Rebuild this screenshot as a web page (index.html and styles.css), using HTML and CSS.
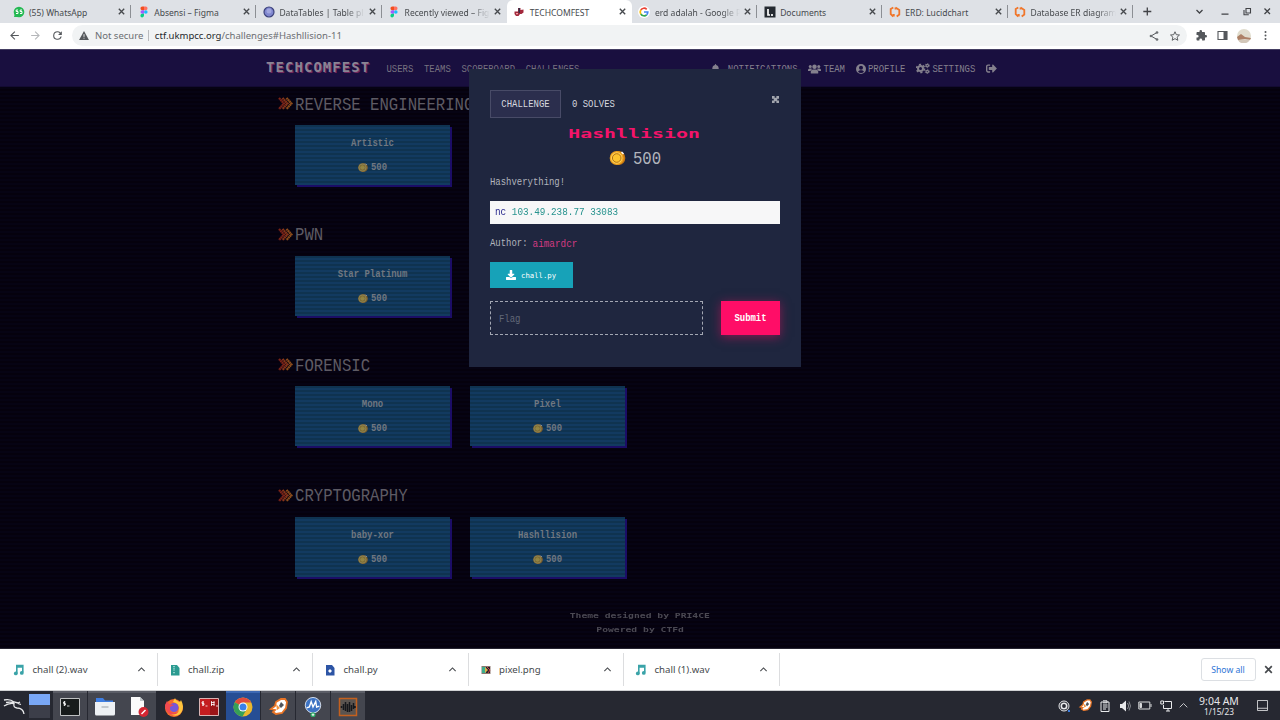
FILE: index.html
```html
<!DOCTYPE html>
<html lang="en">
<head>
<meta charset="utf-8">
<title>TECHCOMFEST</title>
<link rel="stylesheet" href="styles.css">
</head>
<body>
<svg class="defs" aria-hidden="true">
  <symbol id="close" viewBox="0 0 10 10"><path d="M2 2l6 6M8 2l-6 6" stroke="currentColor" stroke-width="1.5" fill="none"/></symbol>
  <symbol id="up" viewBox="0 0 10 10"><path d="M1.5 6.8L5 3.3l3.5 3.5" stroke="currentColor" stroke-width="1.2" fill="none"/></symbol>
  <symbol id="figma" viewBox="0 0 10 12"><path d="M5 0.500H3.300a1.800 1.800 0 000 3.700H5z" fill="#f24e1e"/><path d="M5 .5h1.700a1.800 1.800 0 010 3.700H5z" fill="#ff7262"/><path d="M5 4.200H3.300a1.800 1.800 0 000 3.600H5z" fill="#a259ff"/><circle cx="6.800" cy="6" r="1.800" fill="#1abcfe"/><path d="M5 7.800H3.300a1.800 1.800 0 101.700 1.800z" fill="#0acf83"/></symbol>
  <symbol id="lucid" viewBox="0 0 12 12"><path d="M4.300 1.500L1.700 3v5l2.600 2.500M6.500 1.500L10.300 4v4.500l-2.600 2M6.500 1.500v2M4.800 8v2.500" fill="none" stroke="#f0762b" stroke-width="1.800"/></symbol>
  <symbol id="coin" viewBox="0 0 16 16"><ellipse cx="9.200" cy="8" rx="6.600" ry="7" fill="#c87812"/><circle cx="7.200" cy="8" r="7" fill="#eea11e"/><circle cx="7.200" cy="8" r="5.700" fill="#ffd35a"/><circle cx="7.200" cy="8" r="4.300" fill="#fcc32f" stroke="#a9680c" stroke-width=".9"/><path d="M12 2l2 2" stroke="#fff" stroke-width="1.500"/></symbol>
  <symbol id="chev" viewBox="0 0 15 13"><path d="M1 1l5 5.500L1 12" stroke="#a52f1b" stroke-width="2.300" fill="none" stroke-dasharray="1.800 .3"/><path d="M4.500 1l5 5.500-5 5.500" stroke="#b2451d" stroke-width="2.300" fill="none" stroke-dasharray="1.800 .3"/><path d="M8.500 1l5 5.500-5 5.500" stroke="#b9651f" stroke-width="2.300" fill="none" stroke-dasharray="1.800 .3"/></symbol>
  <symbol id="music" viewBox="0 0 12 12"><path d="M3.800 9.500V1.500h6v7M3.800 3h6" fill="none" stroke="#3aa3a8" stroke-width="1.600"/><circle cx="2.800" cy="9.400" r="1.900" fill="#3aa3a8"/><circle cx="8.800" cy="8.900" r="1.900" fill="#3aa3a8"/></symbol>
  <symbol id="burp" viewBox="0 0 20 18"><path d="M3 11l4-3 1-4 5-3h4l2 3-1 6-4 5-6 1-3-2 2-2z" fill="#fff" stroke="#e87425" stroke-width="1.800"/><path d="M8 6l4 4-3 2z" fill="#f3933d"/><path d="M13 4l3 3-3 3-2-2z" fill="#51545b"/></symbol>
</svg>

<header class="tabs">
  <div class="tab"><svg class="fav" viewBox="0 0 12 12"><circle cx="6" cy="6" r="5.300" fill="#24b953"/><path d="M1 11l1-4 3 4z" fill="#24b953"/><path d="M5 4H3.200v1.500H5v2H3M9 4H7.200v1.500H9v2H7" stroke="#fff" fill="none"/></svg><span class="label">(55) WhatsApp</span><svg class="x"><use href="#close"/></svg></div>
  <div class="tab"><svg class="fav"><use href="#figma"/></svg><span class="label">Absensi – Figma</span><svg class="x"><use href="#close"/></svg></div>
  <div class="tab"><svg class="fav" viewBox="0 0 12 12"><circle cx="6" cy="6" r="5" fill="#8087cf" stroke="#3c427c" stroke-width="1.200"/><circle cx="6" cy="5" r="2.500" fill="#a1a6df"/></svg><span class="label fade">DataTables | Table pl</span><svg class="x"><use href="#close"/></svg></div>
  <div class="tab last"><svg class="fav"><use href="#figma"/></svg><span class="label fade">Recently viewed – Fig</span><svg class="x"><use href="#close"/></svg></div>
  <div class="tab active"><svg class="fav" viewBox="0 0 12 12"><path d="M1.500 5.500h3.500V2h2.500v2l3-.5v3l-2 1.500H7l-1.500 2H3L1.500 8z" fill="#a3283c"/><path d="M5.500 2h1.500v5H5.500z" fill="#343149"/><path d="M3 7h2v1.300H3z" fill="#f0a5a7"/></svg><span class="label">TECHCOMFEST</span><svg class="x"><use href="#close"/></svg></div>
  <div class="tab"><svg class="fav" viewBox="0 0 12 12"><circle cx="6" cy="6" r="6" fill="#fff"/><g fill="none" stroke-width="1.700"><path d="M2.800 4A3.800 3.800 0 018.700 3.300" stroke="#ea4335"/><path d="M2.800 4a3.800 3.800 0 000 4" stroke="#fbbc05"/><path d="M2.800 8a3.800 3.800 0 005.800.8" stroke="#34a853"/><path d="M8.600 8.800A3.800 3.800 0 009.800 6H6" stroke="#4285f4"/></g></svg><span class="label fade">erd adalah - Google P</span><svg class="x"><use href="#close"/></svg></div>
  <div class="tab"><svg class="fav" viewBox="0 0 12 12"><path d="M.5.500h11v11H.5z" fill="#252a31"/><path d="M4 3v6h2M8 8v2" stroke="#fff" stroke-width="1.700" fill="none"/></svg><span class="label">Documents</span><svg class="x"><use href="#close"/></svg></div>
  <div class="tab"><svg class="fav"><use href="#lucid"/></svg><span class="label">ERD: Lucidchart</span><svg class="x"><use href="#close"/></svg></div>
  <div class="tab"><svg class="fav"><use href="#lucid"/></svg><span class="label fade">Database ER diagram</span><svg class="x"><use href="#close"/></svg></div>
  <svg class="strip-end" viewBox="0 0 147 23" fill="none" stroke="#404246" stroke-width="1.300"><path d="M10.300 11.500h8M14.300 7.500v8"/><path d="M63.500 10l3 3 3-3M88.500 14.200h7"/><path d="M113 8.500h4.500v4.500H113zM111 10v4.800h4.800" stroke-width="1.100"/><path d="M131.500 8.500l5.500 5.500M137 8.500l-5.500 5.500"/></svg>
</header>

<div class="toolbar">
  <svg class="tool" viewBox="0 0 24 24"><path d="M20 11H7.800l5.600-5.600L12 4l-8 8 8 8 1.400-1.400L7.800 13H20z"/></svg>
  <svg class="tool dim" viewBox="0 0 24 24"><path d="M4 11h12.200l-5.600-5.600L12 4l8 8-8 8-1.400-1.400 5.600-5.600H4z"/></svg>
  <svg class="tool" viewBox="0 0 24 24"><path d="M17.650 6.350A7.960 7.960 0 0 0 12 4a8 8 0 1 0 7.730 10h-2.080A6 6 0 1 1 12 6c1.660 0 3.140.69 4.220 1.780L13 11h7V4z"/></svg>
  <div class="omnibox">
    <svg class="warn" viewBox="0 0 22 20"><path d="M11 0l11 20H0z" fill="#55585c"/><path d="M11 7v6M11 15v2" stroke="#f1f3f4" stroke-width="2"/></svg>
    <span class="insecure">Not secure</span><span class="url"><b>ctf.ukmpcc.org</b>/challenges#Hashllision-11</span>
    <svg class="tool share" viewBox="0 0 24 24"><path d="M18 5L6 12l12 7" fill="none" stroke="#55585c" stroke-width="2"/><circle cx="18" cy="5" r="2.700"/><circle cx="6" cy="12" r="2.700"/><circle cx="18" cy="19" r="2.700"/></svg>
    <svg class="tool" viewBox="0 0 24 24"><path d="M12 3.500l2.600 5.900 6.400.6-4.800 4.300 1.400 6.300L12 17.300l-5.600 3.300 1.400-6.300L3 10l6.400-.6z" fill="none" stroke="#55585c" stroke-width="1.900"/></svg>
  </div>
  <div class="actions">
    <svg class="tool" viewBox="0 0 24 24"><path d="M20.500 11H19V7c0-1.100-.9-2-2-2h-4V3.500a2.500 2.500 0 0 0-5 0V5H4c-1.100 0-2 .9-2 2v3.800h1.500a2.700 2.700 0 0 1 0 5.400H2V20c0 1.100.9 2 2 2h3.800v-1.500a2.700 2.700 0 0 1 5.400 0V22H17c1.100 0 2-.9 2-2v-4h1.500a2.500 2.500 0 0 0 0-5z"/></svg>
    <svg class="tool" viewBox="0 0 24 24"><path d="M3 4h18v16H3z" fill="none" stroke="#55585c" stroke-width="2.200"/><path d="M14 4h7v16h-7z"/></svg>
    <svg class="avatar" viewBox="0 0 14 14"><circle cx="7" cy="7" r="7" fill="#e0dccd"/><path d="M0 8l4-3 4 3 6 1-1 2-5-1-7 1z" fill="#ad8066"/><path d="M1 11l12-.5a7 7 0 01-11 2z" fill="#d2c7b9"/></svg>
    <svg class="tool" viewBox="0 0 24 24"><circle cx="12" cy="5" r="2"/><circle cx="12" cy="12" r="2"/><circle cx="12" cy="19" r="2"/></svg>
  </div>
</div>

<main class="page">
  <nav class="nav">
    <span class="brand">TECHCOMFEST</span>
    <div class="links"><span class="px">USERS</span><span class="px">TEAMS</span><span class="px">SCOREBOARD</span><span class="px">CHALLENGES</span></div>
    <div class="links user">
      <span class="item bell"><svg width="9" height="10" viewBox="0 0 448 512"><path d="M224 512c35 0 64-29 64-64H160c0 35 29 64 64 64zm215-150c-19-21-55-52-55-154 0-78-55-140-128-155V32c0-18-14-32-32-32s-32 14-32 32v21C119 68 64 130 64 208c0 102-36 133-55 154-6 7-9 14-9 22 0 16 13 32 32 32h384c19 0 32-16 32-32 0-8-3-15-9-22z"/></svg><span class="px">NOTIFICATIONS</span></span>
      <span class="item"><svg width="13" height="10" viewBox="0 0 26 20"><circle cx="4.500" cy="5" r="3"/><circle cx="21.500" cy="5" r="3"/><circle cx="13" cy="5.500" r="4.500"/><path d="M0 14v-2q0-3 3-3h3q2 0 2.500 1-3 1.500-3.500 4zM26 14v-2q0-3-3-3h-3q-2 0-2.500 1 3 1.500 3.500 4zM5.500 18v-2q0-5 5-5h5q5 0 5 5v2q0 1-1 1h-13q-1 0-1-1z"/></svg><span class="px">TEAM</span></span>
      <span class="item"><svg width="10" height="10" viewBox="0 0 20 20"><path fill-rule="evenodd" d="M10 0a10 10 0 100 20 10 10 0 000-20zm0 3.500a4 4 0 110 8 4 4 0 010-8zM4 15.500q1.500-3 4-3h4q2.500 0 4 3-2.500 2.700-6 2.700t-6-2.700z"/></svg><span class="px">PROFILE</span></span>
      <span class="item"><svg width="14" height="11" viewBox="0 0 28 22"><g fill="none" stroke="#84808d"><circle cx="9" cy="11" r="5" stroke-width="4"/><circle cx="9" cy="11" r="8" stroke-width="3" stroke-dasharray="4.400 4"/><circle cx="22.500" cy="5" r="2.500" stroke-width="2.500"/><circle cx="22.500" cy="5" r="4.300" stroke-width="1.500" stroke-dasharray="2.300 2.200"/><circle cx="22.500" cy="17" r="2.500" stroke-width="2.500"/><circle cx="22.500" cy="17" r="4.300" stroke-width="1.500" stroke-dasharray="2.300 2.200"/></g></svg><span class="px">SETTINGS</span></span>
      <span class="item"><svg width="11" height="11" viewBox="0 0 512 512"><path d="M497 273L329 441c-15 15-41 4.500-41-17v-96H152c-13 0-24-11-24-24v-96c0-13 11-24 24-24h136V88c0-21 26-32 41-17l168 168c9 9 9 25 0 34zM192 436v-40c0-7-5-12-12-12H96c-18 0-32-14-32-32V160c0-18 14-32 32-32h84c7 0 12-5 12-12V76c0-7-5-12-12-12H96c-53 0-96 43-96 96v192c0 53 43 96 96 96h84c7 0 12-5 12-12z"/></svg></span>
    </div>
  </nav>

  <div class="board">
    <section class="category"><h2><svg><use href="#chev"/></svg><span>REVERSE ENGINEERING</span></h2>
      <div class="cards"><div class="card"><span class="px bold">Artistic</span><span class="pts"><svg><use href="#coin"/></svg><span class="px bold">500</span></span></div></div></section>
    <section class="category"><h2><svg><use href="#chev"/></svg><span>PWN</span></h2>
      <div class="cards"><div class="card"><span class="px bold">Star Platinum</span><span class="pts"><svg><use href="#coin"/></svg><span class="px bold">500</span></span></div></div></section>
    <section class="category"><h2><svg><use href="#chev"/></svg><span>FORENSIC</span></h2>
      <div class="cards"><div class="card"><span class="px bold">Mono</span><span class="pts"><svg><use href="#coin"/></svg><span class="px bold">500</span></span></div><div class="card"><span class="px bold">Pixel</span><span class="pts"><svg><use href="#coin"/></svg><span class="px bold">500</span></span></div></div></section>
    <section class="category"><h2><svg><use href="#chev"/></svg><span>CRYPTOGRAPHY</span></h2>
      <div class="cards"><div class="card"><span class="px bold">baby-xor</span><span class="pts"><svg><use href="#coin"/></svg><span class="px bold">500</span></span></div><div class="card"><span class="px bold">Hashllision</span><span class="pts"><svg><use href="#coin"/></svg><span class="px bold">500</span></span></div></div></section>
  </div>
  <footer class="credits"><span>Theme designed by PRI4CE</span><span>Powered by CTFd</span></footer>

  <div class="modal">
    <div class="modal-tabs"><span class="pill"><span class="px">CHALLENGE</span></span><span class="px solves">0 SOLVES</span><svg class="dismiss" viewBox="0 0 8 8"><path d="M0 0h3v2h2V0h3v3H6v2h2v3H5V6H3v2H0V5h2V3H0z"/></svg></div>
    <div class="title"><span>Hashllision</span></div>
    <div class="value"><svg><use href="#coin"/></svg><span>500</span></div>
    <p class="desc"><span class="px">Hashverything!</span></p>
    <pre class="code"><span><b>nc</b> 103.49.238.77 33083</span></pre>
    <p class="author"><span class="px">Author:</span><span class="handle">aimardcr</span></p>
    <div class="file"><svg viewBox="0 0 512 512"><path d="M216 0h80c13 0 24 11 24 24v168h88c18 0 26 22 14 34L270 378c-8 8-20 8-28 0L90 226c-12-12-3-34 14-34h88V24c0-13 11-24 24-24zm296 376v112c0 13-11 24-24 24H24c-13 0-24-11-24-24V376c0-13 11-24 24-24h147l49 49c20 20 52 20 72 0l49-49h147c13 0 24 11 24 24z"/></svg><span>chall.py</span></div>
    <div class="form"><div class="flag"><span class="px">Flag</span></div><div class="submit"><span class="px bold">Submit</span></div></div>
  </div>
</main>

<div class="downloads">
  <div class="dl"><svg class="ico"><use href="#music"/></svg><span>chall (2).wav</span><svg class="up"><use href="#up"/></svg></div>
  <div class="dl"><svg class="ico" viewBox="0 0 12 12"><path d="M2 1h6l2.500 3v7.500H2z" fill="#2b9b91"/><path d="M5 2v5M5 8v2" stroke="#c8ede8" stroke-width="1.300" stroke-dasharray="1 .8"/></svg><span>chall.zip</span><svg class="up"><use href="#up"/></svg></div>
  <div class="dl"><svg class="ico" viewBox="0 0 12 12"><path d="M2 1h6l2.500 3v7.500H2z" fill="#2d55a5"/><path d="M4 7l2-2 2 2-2 2z" fill="#fff"/></svg><span>chall.py</span><svg class="up"><use href="#up"/></svg></div>
  <div class="dl"><svg class="ico" viewBox="0 0 12 12"><path d="M1.500 2h9v8h-9z" fill="#8b7770"/><path d="M2 3h4v6H2z" fill="#3dae8d"/><path d="M6 3h4v6H6z" fill="#27222b"/><path d="M5 3l3 3-3 3z" fill="#e1b14c"/><path d="M7 3l3 3-2 3" stroke="#cb4148" fill="none"/></svg><span>pixel.png</span><svg class="up"><use href="#up"/></svg></div>
  <div class="dl"><svg class="ico"><use href="#music"/></svg><span>chall (1).wav</span><svg class="up"><use href="#up"/></svg></div>
  <span class="showall">Show all</span><svg class="shut"><use href="#close"/></svg>
</div>

<div class="taskbar">
  <svg class="kali" viewBox="0 0 22 18" fill="none" stroke="#e9eaec" stroke-width="1.300"><path d="M1 3q6-1.500 10 2l4 1 2-1M3 5.500q5-1 8 .5M1 9q5-3.500 10-2.500-1 4 3 4.500 6 0 7 6M15 6.500l3 1"/></svg>
  <span class="pager"></span>
  <span class="task on"><svg viewBox="0 0 20 18"><path d="M.5.500h19v17H.5z" fill="#171b1b" stroke="#bfc1c2"/><path d="M5.500 4H3.500v1.500h2V7h-2M4.500 3v5M7 8h2.500" stroke="#fff" fill="none" stroke-width=".8"/></svg></span>
  <span class="task on"><svg viewBox="0 0 20 18"><path d="M1 0h7l2 2.500h8V8H1z" fill="#3f7ee2"/><path d="M0 4h20v12q0 1.500-1.500 1.500h-17Q0 17.500 0 16z" fill="#eef1f4"/><path d="M6.500 9h7" stroke="#b5bac0" stroke-width="1.500"/></svg></span>
  <span class="task on"><svg viewBox="0 0 20 20"><path d="M2 0h9l4 4v14H2z" fill="#fbfbfb"/><path d="M11 0v4h4z" fill="#bcc3c8"/><circle cx="14.500" cy="15" r="5" fill="#d42632"/><path d="M12.500 17l4-4" stroke="#fff" stroke-width="1.500"/></svg></span>
  <span class="task"><svg viewBox="0 0 20 20"><circle cx="10" cy="11" r="9" fill="#f4692e"/><path d="M11 1q1 3 5 4l1-2q4 7 0 13-5 5-10 1 8 0 8-6-1-5-6-6z" fill="#ffc53d"/><circle cx="10" cy="10.500" r="4.500" fill="#7656d8"/><path d="M1 8l2-4 2 3 5 1-4 2v4q4 4 9 0-3 5-9 3-5-3-5-9z" fill="#f04950"/></svg></span>
  <span class="task"><svg viewBox="0 0 20 18"><path d="M.5.500h19v17H.5z" fill="#c41d20" stroke="#d9b4b4"/><path d="M11 1h8v16h-8z" fill="#9b1518"/><path d="M5 4H3v1.500h2V7H3M4 3v5M6.500 8h2M12.500 3v5M15 3v5M12 4.500h3.500M12 6.500h3.500M17 8h2" stroke="#fff" fill="none" stroke-width=".8"/></svg></span>
  <span class="task chrome"><svg viewBox="0 0 20 20"><circle cx="10" cy="10" r="9.500" fill="#eab82e"/><path d="M10 10L1.800 5.200A9.500 9.500 0 0118.200 5.500H10z" fill="#e04a3c"/><path d="M10 10L1.800 5.200A9.500 9.500 0 009.500 19.500l4.200-7.200z" fill="#35a058"/><circle cx="10" cy="10" r="4.500" fill="#fff"/><circle cx="10" cy="10" r="3.500" fill="#3b80e8"/></svg></span>
  <span class="task on"><svg><use href="#burp"/></svg></span>
  <span class="task on"><svg viewBox="0 0 20 22"><circle cx="10" cy="9" r="8.500" fill="#3d73c3" stroke="#e0e8f4"/><path d="M3 12l3-1 2-6 2 6 3-6 1 6 3-1" stroke="#fff" stroke-width="1.500" fill="none"/><circle cx="10" cy="19.500" r="2.800" fill="#29a864"/><path d="M8.500 19.500h3M10 18v3" stroke="#fff"/></svg></span>
  <span class="task on"><svg viewBox="0 0 20 20"><path d="M1.500 1.500h17v17h-17z" fill="#5a5450" stroke="#c4601e" stroke-width="1.500"/><path d="M3.500 9v2M5.500 7v6M7.500 5v9M9.500 7v8M11.500 5v10M13.500 8v6M15.500 6v6M17 9v2" stroke="#15171c" stroke-width="1.500"/></svg></span>
  <div class="tray">
    <svg viewBox="0 0 12 12"><circle cx="6" cy="6" r="5" fill="none" stroke="#e8e9eb"/><circle cx="6" cy="6" r="2.700" fill="none" stroke="#e8e9eb" stroke-width="1.600"/><circle cx="11" cy="11" r="1.200" fill="#3b7de0"/></svg>
    <svg class="wide"><use href="#burp"/></svg>
    <svg viewBox="0 0 12 12" fill="none" stroke="#e8e9eb"><path d="M2 2h8v9.500H2zM4 .8h4v2H4M4 5h4.500M4 7h4.500M4 9h3"/></svg>
    <svg viewBox="0 0 12 12"><path d="M1 4h2l4-3.500v11L3 8H1z" fill="#e8e9eb"/><path d="M8.500 3q2.500 3 0 6M10 1.500q3 4.500 0 9" stroke="#888a90" fill="none"/></svg>
    <svg class="wide" viewBox="0 0 14 12" fill="none" stroke="#d8d9db"><path d="M.8 2.500h11v7H.8zM13 4.500v3"/><path d="M2 4h1.500v4H2z" fill="#d8d9db"/></svg>
    <svg viewBox="0 0 12 12" fill="none" stroke="#e8e9eb"><path d="M4.500 1.500h7v7H3.500V5M.8 1h2.700v3H.8zM6 11h4M8 8.500V11"/></svg>
    <svg class="tray-up" viewBox="0 0 10 10"><path d="M.8 7L5 2.800 9.200 7" stroke="#d8d9db" fill="none"/></svg>
  </div>
  <div class="clock"><span>9:04 AM</span><small>1/15/23</small></div>
  <svg class="desk" viewBox="0 0 12 12"><path d="M.5.500h11v11H.5zM.5 9h11" fill="none" stroke="#d8d9db"/></svg>
</div>
</body>
</html>
```
FILE: styles.css
```css
* { box-sizing: border-box; }
body {
  margin: 0; width: 1280px; height: 720px; overflow: hidden;
  display: flex; flex-direction: column;
  font-family: "Noto Sans", sans-serif; font-size: 8.550px; color: #46494d; background: #05020f;
}
svg { flex: none; }
svg:not([fill]) { fill: currentColor; }
.defs { position: absolute; width: 0; height: 0; }
h2, p, pre { margin: 0; font-weight: normal; }

/* browser tabs */
.tabs { height: 23px; flex: none; background: #dee1e6; display: flex; padding-left: 6px; }
.tab { width: 125.200px; flex: none; display: flex; align-items: center; padding: 0 2px 0 7px; position: relative; }
.tab::after { content: ""; width: 1px; height: 13px; background: #8c8f94; position: absolute; right: 0; top: 5px; }
.tab.last::after, .tab.active::after { display: none; }
.tab.active { background: #fff; border-radius: 6px 6px 0 0; }
.fav { width: 12px; height: 12px; margin-right: 4.500px; margin-left: -.5px; }
.label { flex: 1; min-width: 0; white-space: nowrap; margin-right: 3px; transform: translateY(.5px) scaleY(1.060); }
.fade { -webkit-mask-image: linear-gradient(90deg, #000 78%, transparent 100%); mask-image: linear-gradient(90deg, #000 78%, transparent 100%); }
.x { width: 9px; height: 9px; margin-right: 3px; }
.strip-end { width: 147px; height: 23px; }

/* address bar */
.toolbar { height: 26px; flex: none; background: #fff; display: flex; align-items: center; padding-left: 8px; color: #55585c; border-bottom: 1px solid #fff; }
.tool { width: 13px; height: 13px; margin-right: 8.300px; }
.dim { color: #b5b7ba; }
.omnibox { width: 1115px; height: 21px; border-radius: 11px; background: #f1f3f4; display: flex; align-items: center; padding: 0 6px 0 7px; font-size: 9.540px; color: #6b6e72; }
.omnibox .tool { width: 12px; height: 12px; margin-right: 9px; }
.omnibox .tool:last-child { margin-right: 0; }
.warn { width: 10px; height: 9px; margin-right: 6px; }
.insecure { border-right: 1px solid #b9bbbe; padding-right: 5px; line-height: 11px; margin-right: 5.500px; }
.url b { font-weight: normal; color: #25282b; }
.omnibox .share { margin-left: auto; }
.actions { display: flex; align-items: center; margin-left: -1px; padding-left: 5px; }
.actions .tool { margin: 0 4px; padding: .5px; }
.avatar { width: 14px; height: 14px; margin: 0 4px; }

/* CTF page */
.page { height: 600px; flex: none; position: relative; overflow: hidden; background: #05020f; font-family: "Liberation Mono", monospace; border-bottom: 1px solid #26242f;
  background-image: repeating-linear-gradient(#05010d 0 2px, #060313 2px 4px); }
.px { display: inline-block; font-size: 8.950px; line-height: 10px; transform: translateY(1px) scaleY(1.200); white-space: pre; }
.bold { font-weight: bold; }
.nav { height: 38px; background: #190f3f; border-top: 1px solid #443e62; border-bottom: 1px solid #130b32; display: flex; align-items: center; padding: 1px 0 0 266px; color: #77727f; }
.brand { width: 120.500px; font: bold 14px/16px "DejaVu Sans Mono", monospace; letter-spacing: 1.050px; color: #8a8494; text-shadow: 1px 1px #71285e; transform: translateY(-2px) scaleY(.95); }
.links { display: flex; gap: 10.650px; align-items: center; }
.user { margin-left: 131.500px; color: #84808d; }
.item { display: flex; align-items: center; gap: 2.300px; }
.bell { gap: 8px; }

.board { padding: 0 0 0 278px; color: #77747c; }
.category { height: 130.500px; }
.category:first-child { margin-top: -1px; }
h2 { height: 39px; display: flex; align-items: center; padding-bottom: 4px; }
h2 svg { width: 15px; height: 13px; margin-right: 2px; opacity: .75; }
h2 span { font-size: 15.650px; line-height: 18px; transform: translateY(1px) scaleY(1.200); color: #5e5b64; }
.cards { display: flex; gap: 20px; padding-left: 17px; }
.card { width: 155px; height: 60px; display: flex; flex-direction: column; align-items: center; padding-top: 13px; gap: 14px; color: #6f7780;
  background: repeating-linear-gradient(#0f3350 0 2px, #123a60 2px 4px); box-shadow: 2px 2px #1b0d66; }
.pts { display: flex; gap: 3px; align-items: center; }
.pts svg { width: 10px; height: 10px; opacity: .55; transform: translateY(.5px); }
.credits { display: flex; flex-direction: column; align-items: center; gap: 4px; padding-top: 3px; color: #4b4953; font: bold 8px/10px "DejaVu Sans Mono", monospace; }
.credits span { transform: scale(1.212, .95); }

/* challenge dialog floats over the board */
.modal { position: absolute; left: 469px; top: 20px; width: 332px; height: 298px; background: #1f263f; padding: 21px; color: #b1b4bc; }
.modal-tabs { height: 28px; display: flex; align-items: center; color: #d6d8df; }
.pill { width: 71px; height: 28px; display: flex; align-items: center; justify-content: center; background: #2b2e4d; border: 1px solid #484b67; margin-right: 11px; }
.dismiss { width: 7px; height: 7px; margin: 0 1px 9px auto; color: #a2a5ae; }
.title { height: 30px; display: flex; align-items: center; justify-content: center; }
.title span { font: bold 13px/16px "DejaVu Sans Mono", monospace; color: #f5136a; transform: translate(-1px, 1px) scaleX(1.530); }
.value { height: 20px; display: flex; align-items: center; justify-content: center; gap: 7px; }
.value svg { width: 17px; height: 16px; }
.value span { font-size: 15.650px; line-height: 18px; transform: translateY(1px) scaleY(1.200); }
.desc { height: 33px; padding-top: 9px; font-size: 0; }
.code { height: 23px; background: #f7f7f8; padding: 0 5px; display: flex; align-items: center; font: 9.330px/11px "Liberation Mono", monospace; color: #27938e; }
.code b { font-weight: normal; color: #26268c; }
.code span { transform: scaleY(1.120); }
.author { height: 38px; display: flex; align-items: center; gap: 5px; }
.handle { font-size: 9.330px; line-height: 11px; color: #d23a82; transform: translateY(1px) scaleY(1.120); }
.file { width: 83px; height: 26px; background: #17a2b8; color: #fff; display: flex; align-items: center; padding-left: 16px; gap: 5px; }
.file svg { width: 10px; height: 10px; }
.file span { font: 7.300px/9px "DejaVu Sans Mono", monospace; }
.form { display: flex; justify-content: space-between; margin-top: 13px; }
.flag { width: 213px; height: 34px; border: 1px dashed #a3a7b3; padding: 2px 0 0 8px; display: flex; align-items: center; color: #626878; }
.submit { width: 59px; height: 34px; background: #ff0d67; color: #fff; display: flex; align-items: center; justify-content: center; box-shadow: 0 2px 10px #f00f6480; }

/* download shelf */
.downloads { height: 42px; flex: none; background: #fff; display: flex; align-items: center; font-size: 9.650px; border-bottom: 1px solid #d1d2d4; }
.dl { width: 155.500px; height: 33px; display: flex; align-items: center; padding: 0 10px 0 11px; border-right: 1px solid #dcdddf; }
.dl:first-child { width: 157.500px; padding-left: 13px; }
.ico { width: 12px; height: 12px; margin-right: 7.500px; }
.up { width: 9px; height: 9px; margin-left: auto; margin-right: .7px; }
.showall { margin-left: auto; width: 55px; height: 23px; border: 1px solid #dcdfe3; border-radius: 3px; display: flex; align-items: center; justify-content: center; color: #2f75d6; font-size: 8.700px; }
.shut { width: 11px; height: 11px; margin: 0 6.500px 0 7px; }

/* desktop panel */
.taskbar { height: 29px; flex: none; background: #262831; display: flex; align-items: center; padding-left: 3px; color: #e6e7e9; }
.kali { width: 22px; height: 18px; margin-right: 4px; }
.pager { width: 21px; height: 24px; background: linear-gradient(#79a7f5 0 11px, #3c3e49 11px); margin: 0 3px 0 0; }
.task { width: 34px; height: 29px; margin-right: .7px; display: flex; align-items: center; justify-content: center; border-top: 2px solid transparent; }
.task svg { width: 20px; height: 20px; }
.on { background: #44464f; border-color: #5b5d66; }
.chrome { background: #264e94; border-color: #3d69b3; }
.tray { margin-left: auto; display: flex; align-items: center; gap: 7.500px; }
.tray svg { width: 12px; height: 12px; }
.tray .wide { width: 14px; height: 13px; }
.tray .tray-up { width: 9px; height: 9px; }
.clock { width: 42px; margin-left: 10px; display: flex; flex-direction: column; align-items: center; font-size: 10.500px; line-height: 11px; white-space: nowrap; }
.clock small { font-size: 8.300px; line-height: 9px; }
.desk { width: 11px; height: 11px; margin: 0 12px 0 17px; }
```
